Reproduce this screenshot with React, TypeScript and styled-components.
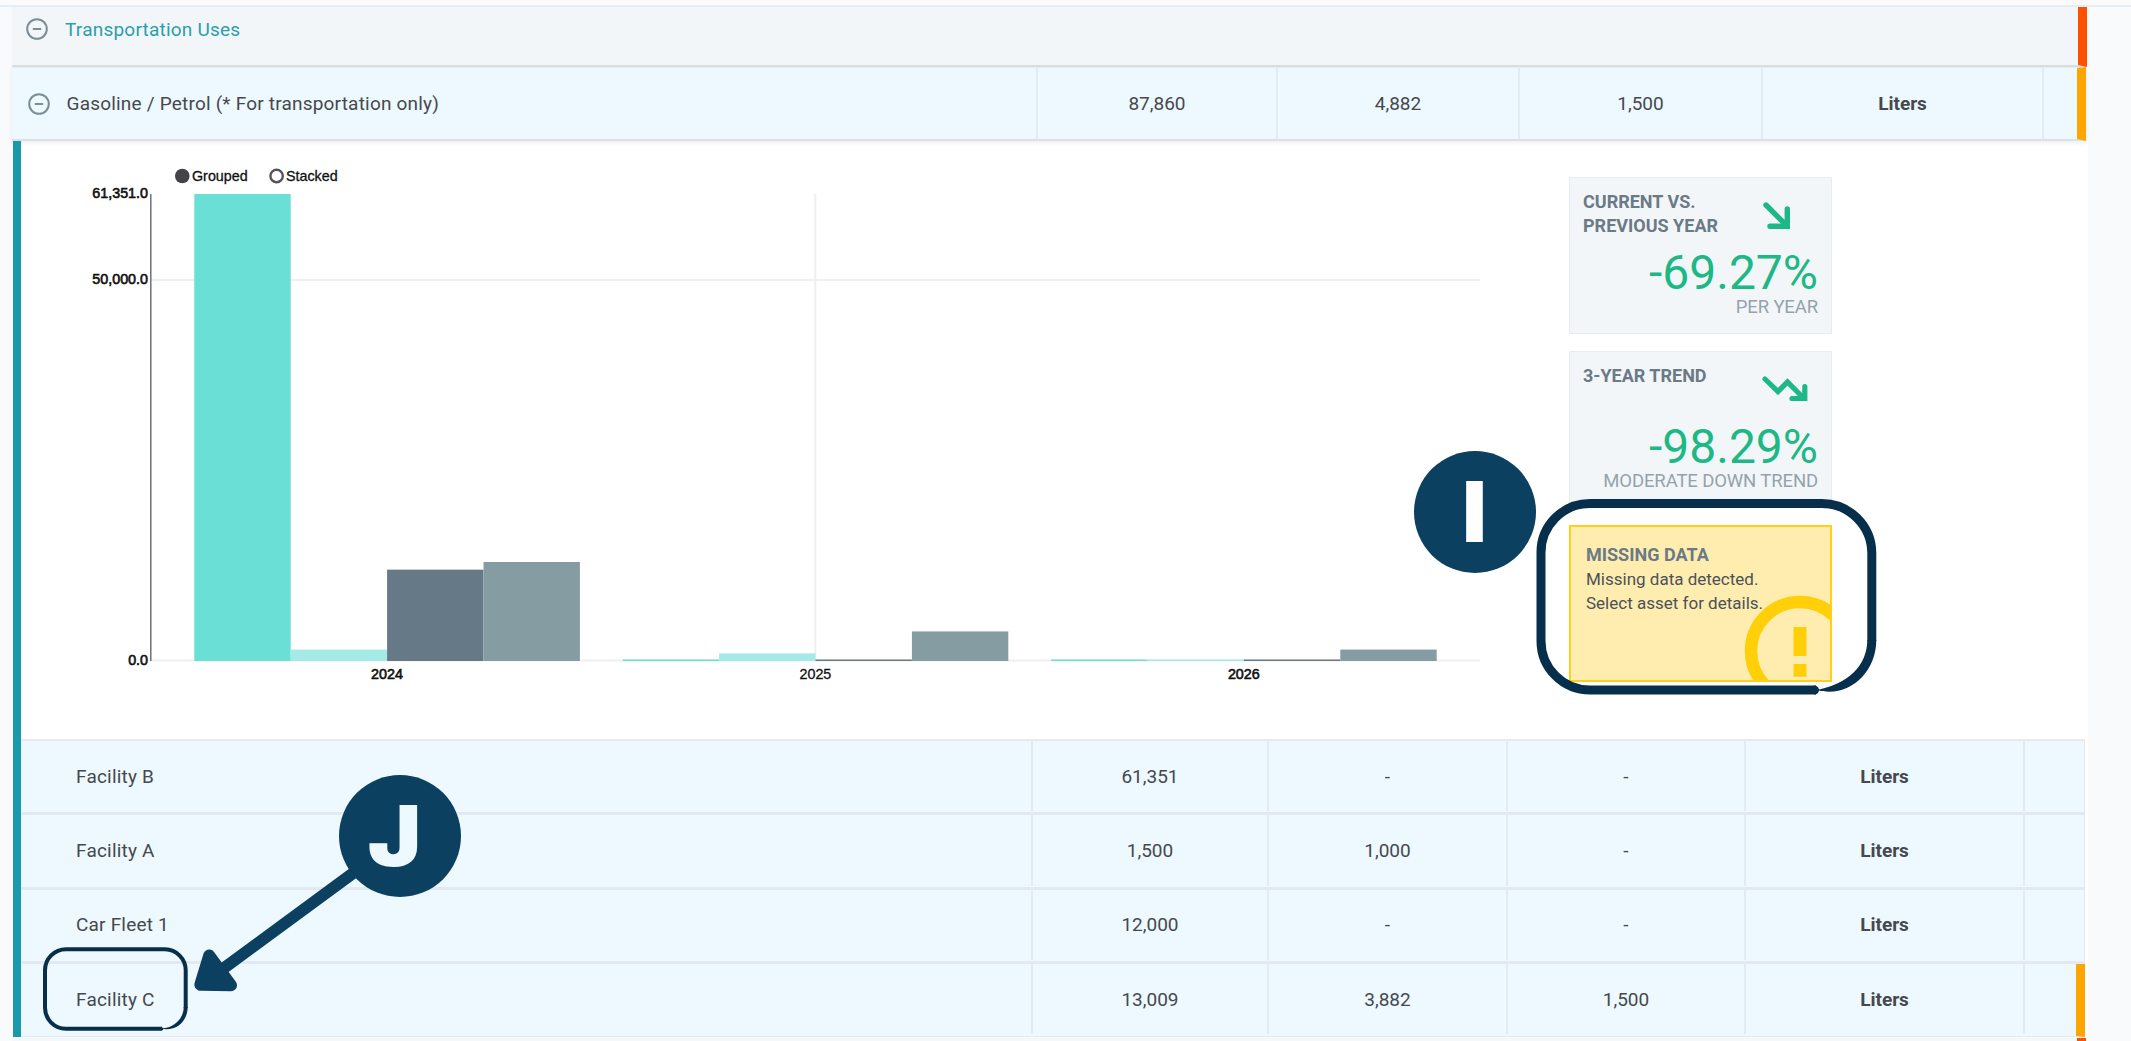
import React from "react";
import styled, { createGlobalStyle } from "styled-components";

const ink = "#45494d";
const navy = "#0c4061";
const outline = "#072f4b";
const green = "#1db885";

const GlobalStyle = createGlobalStyle`
  * { box-sizing: border-box; }
  html, body { margin: 0; padding: 0; background: #f8fafc; }
  body { font-family: Roboto, "Liberation Sans", sans-serif; color: ${ink}; }
`;

const Page = styled.div`
  position: relative;
  width: 2131px;
  height: 1041px;
  overflow: hidden;
  background: #f8fafc;
`;

const TopStrip = styled.div`
  height: 7px;
  background: #fbfbfb;
  border-bottom: 2px solid #e6edf3;
`;

const Panel = styled.main`
  margin-left: 12px;
  width: 2076px;
`;

const CategoryRow = styled.div`
  display: flex;
  align-items: center;
  width: 2075px;
  height: 60px;
  padding: 0 0 14px 14px;
  background: #f3f6f9;
  border-bottom: 2px solid #d9dee2;
  border-right: 9px solid #ff5000;
  color: #2a9fab;
  font-size: 19px;
`;

const CategoryLabel = styled.span`
  margin-left: 17px;
  letter-spacing: 0.22px;
`;

const Grid = styled.div<{ $cols: string; $flag?: string }>`
  display: grid;
  grid-template-columns: ${(p) => p.$cols};
  border-right: ${(p) => (p.$flag ? `9px solid ${p.$flag}` : "1px solid #e3eaf1")};
`;

const FuelRow = styled(Grid)`
  position: relative;
  height: 74px;
  width: 2074px;
  background: #edf8ff;
  border-top: 1px solid #e8edf1;
  border-bottom: 2px solid #dbe1e6;
  box-shadow: 0 2px 4px rgba(80, 100, 120, 0.1);
`;

const FacilityRow = styled(Grid)`
  height: 74.4px;
  padding-bottom: 1px;
  background: #edf8ff;
  border-bottom: 3px solid #e3e9f2;
  &:last-child {
    height: 72.8px;
    padding-bottom: 2px;
    border-bottom-width: 1px;
  }
`;

const NameCell = styled.div<{ $indent: number }>`
  display: flex;
  align-items: center;
  padding-left: ${(p) => p.$indent}px;
  font-size: 19px;
  letter-spacing: 0.2px;
`;

const FuelLabel = styled.span`
  margin-left: 17px;
`;

const Cell = styled.div<{ $bold?: boolean }>`
  display: flex;
  align-items: center;
  justify-content: center;
  border-left: 2px solid #e3ebf2;
  font-size: 19px;
  font-weight: ${(p) => (p.$bold ? 700 : 400)};
`;

const Details = styled.section`
  margin-left: 1px;
  width: 2075px;
  border-left: 8px solid #1a99ac;
  background: #fff;
`;

const Overview = styled.div`
  display: flex;
  height: 598px;
`;

const ChartBox = styled.div`
  width: 1548px;
`;

const Cards = styled.div`
  display: flex;
  flex-direction: column;
  gap: 17.7px;
  padding-top: 36px;
`;

const Card = styled.div<{ $warn?: boolean }>`
  position: relative;
  overflow: hidden;
  width: 263px;
  height: 156.5px;
  padding: ${(p) => (p.$warn ? "15.5px 15px" : "12px 13px")};
  background: ${(p) => (p.$warn ? "#ffedb0" : "#f3f6f9")};
  border: ${(p) => (p.$warn ? "2px solid #ffcf1a" : "1px solid #e6edf1")};
`;

const CardHead = styled.div`
  display: flex;
  justify-content: space-between;
  height: 60px;
`;

const IconSlot = styled.div<{ $right: number }>`
  padding: 12px ${(p) => p.$right}px 0 0;
`;

const CardTitle = styled.div`
  font-size: 18px;
  font-weight: 700;
  line-height: 24px;
  color: #6a7a86;
  white-space: pre-line;
`;

const Figure = styled.div`
  height: 46.5px;
  font-size: 48px;
  line-height: 46px;
  text-align: right;
  color: ${green};
`;

const Caption = styled.div`
  font-size: 18.5px;
  letter-spacing: -0.12px;
  line-height: 20px;
  text-align: right;
  color: #93a3ac;
  white-space: nowrap;
`;

const WarnText = styled.div`
  margin-top: 0.5px;
  font-size: 17px;
  line-height: 24px;
  color: #4b5259;
  white-space: pre-line;
`;

const WarnMark = styled.svg`
  position: absolute;
  left: 173px;
  top: 67.5px;
`;

const Facilities = styled.div`
  width: 2063.5px;
  border-top: 2px solid #e3eaf0;
`;

const NextRow = styled.div`
  margin-top: 1px;
  height: 3px;
  width: 2074px;
  background: #f5f8fb;
  border-right: 9px solid #ff5000;
`;

const Annotations = styled.svg`
  position: absolute;
  left: 0;
  top: 0;
`;

const Badge = styled.div<{ $x: number; $y: number; $ink: string }>`
  position: absolute;
  left: ${(p) => p.$x}px;
  top: ${(p) => p.$y}px;
  width: 122px;
  height: 122px;
  border-radius: 50%;
  display: flex;
  align-items: center;
  justify-content: center;
  background: ${navy};
  color: ${(p) => p.$ink};
  font: 900 84px/122px Inter, sans-serif;
`;

const BadgeLetter = styled.span<{ $shift?: number; $stretch?: number }>`
  display: inline-block;
  transform: translateX(${(p) => p.$shift ?? 0}px) scaleX(${(p) => p.$stretch ?? 1});
`;

const Minus = () => (
  <svg width="22" height="22" viewBox="0 0 22 22" fill="none" stroke="#7b8d97" strokeWidth="2">
    <circle cx="11" cy="11" r="9.8" />
    <path d="M6.8 11h8.4" />
  </svg>
);

const DownArrow = () => (
  <svg width="28" height="28" viewBox="0 0 28 28" fill="none" stroke={green} strokeWidth="5.4" strokeLinecap="round" strokeLinejoin="miter">
    <path d="M3 3L23 23" />
    <path d="M24.300 7V24.200H7" />
  </svg>
);

const TrendArrow = () => (
  <svg width="46" height="26" viewBox="0 0 46 26" fill="none" stroke={green} strokeWidth="5.2" strokeLinecap="round" strokeLinejoin="miter">
    <path d="M3 3L16 15.500L25.500 6L41 21.500" />
    <path d="M42.800 10.500V22.500H30" />
  </svg>
);

const YEARS = ["2024", "2025", "2026"];
const SERIES = [
  { name: "Facility B", color: "#6adfd6", values: [61351, 0, 0] },
  { name: "Facility A", color: "#a4eae7", values: [1500, 1000, 0] },
  { name: "Car Fleet 1", color: "#657a86", values: [12000, 0, 0] },
  { name: "Facility C", color: "#859ca3", values: [13009, 3882, 1500] },
];

const AxisText = styled.text<{ $strong?: boolean }>`
  font-family: "Liberation Sans", Arial, sans-serif;
  font-size: 14.3px;
  fill: #111;
  stroke: #111;
  stroke-width: ${(p) => (p.$strong ? 0.6 : 0.3)}px;
`;

const BASE = 661;
const TOP = 194;

const Chart = () => (
  <svg width="1547" height="598" viewBox="21 141 1547 598">
    <circle cx="182.3" cy="176" r="7.3" fill="#444349" />
    <AxisText x="192" y="181">Grouped</AxisText>
    <circle cx="276.6" cy="176" r="6.2" fill="#fff" stroke="#55545c" strokeWidth="2.4" />
    <AxisText x="286" y="181">Stacked</AxisText>
    <path d="M151 280H1480M151 660.5H1480M815.3 194V661" stroke="#efeff1" strokeWidth="2" />
    <path d="M150.8 194V661" stroke="#66666c" strokeWidth="1.4" />
    {SERIES.map((s, i) =>
      s.values.map((v, g) => {
        const h = Math.max(1.5, (v / 61351) * (BASE - TOP));
        return (
          <rect key={s.name + g} x={194.3 + g * 428.4 + i * 96.4} y={BASE - h} width="96.4" height={h} fill={s.color} />
        );
      })
    )}
    <AxisText $strong x="148" y="198" textAnchor="end">61,351.0</AxisText>
    <AxisText $strong x="148" y="284.3" textAnchor="end">50,000.0</AxisText>
    <AxisText $strong x="148" y="664.5" textAnchor="end">0.0</AxisText>
    {YEARS.map((y, g) => (
      <AxisText key={y} $strong={g !== 1} x={387 + g * 428.4} y="679.3" textAnchor="middle">{y}</AxisText>
    ))}
  </svg>
);

const FACILITIES = [
  { name: "Facility B", values: ["61,351", "-", "-"] },
  { name: "Facility A", values: ["1,500", "1,000", "-"] },
  { name: "Car Fleet 1", values: ["12,000", "-", "-"] },
  { name: "Facility C", values: ["13,009", "3,882", "1,500"], flag: "#ffa500" },
];

export default function App() {
  return (
    <Page>
      <GlobalStyle />
      <TopStrip />
      <Panel>
        <CategoryRow>
          <Minus />
          <CategoryLabel>Transportation Uses</CategoryLabel>
        </CategoryRow>
        <FuelRow $cols="1024px 240px 242px 243px 281px 1fr" $flag="#ffa500">
          <NameCell $indent={15.5}>
            <Minus />
            <FuelLabel>Gasoline / Petrol (* For transportation only)</FuelLabel>
          </NameCell>
          <Cell>87,860</Cell>
          <Cell>4,882</Cell>
          <Cell>1,500</Cell>
          <Cell $bold>Liters</Cell>
          <Cell />
        </FuelRow>
        <Details>
          <Overview>
            <ChartBox><Chart /></ChartBox>
            <Cards>
              <Card>
                <CardHead>
                  <CardTitle>{"CURRENT VS.\nPREVIOUS YEAR"}</CardTitle>
                  <IconSlot $right={27}><DownArrow /></IconSlot>
                </CardHead>
                <Figure>-69.27%</Figure>
                <Caption>PER YEAR</Caption>
              </Card>
              <Card>
                <CardHead>
                  <CardTitle>3-YEAR TREND</CardTitle>
                  <IconSlot $right={10.5}><TrendArrow /></IconSlot>
                </CardHead>
                <Figure>-98.29%</Figure>
                <Caption>MODERATE DOWN TREND</Caption>
              </Card>
              <Card $warn>
                <CardTitle>MISSING DATA</CardTitle>
                <WarnText>{"Missing data detected.\nSelect asset for details."}</WarnText>
                <WarnMark width="112" height="112" viewBox="0 0 112 112" fill="none">
                  <circle cx="56" cy="56" r="49" stroke="#ffcf0a" strokeWidth="12.5" />
                  <path d="M49.5 32h13v29h-13zM49.5 69h13v12.7h-13z" fill="#ffcf0a" />
                </WarnMark>
              </Card>
            </Cards>
          </Overview>
          <Facilities>
            {FACILITIES.map((f) => (
              <FacilityRow key={f.name} $cols="1010px 236px 239px 238px 279px 1fr" $flag={f.flag}>
                <NameCell $indent={55}>{f.name}</NameCell>
                {f.values.map((v, i) => <Cell key={i}>{v}</Cell>)}
                <Cell $bold>Liters</Cell>
                <Cell />
              </FacilityRow>
            ))}
          </Facilities>
        </Details>
        <NextRow />
      </Panel>
      <Annotations width="2131" height="1041" fill="none">
        <path d="M1816 690H1590A49 49 0 0 1 1541 641V553A49 49 0 0 1 1590 503.500H1822A50 50 0 0 1 1871.800 553V641" stroke={outline} strokeWidth="9" />
        <path d="M1814 685.500C1817 685.500 1819 688 1819 689.500C1847 684 1867.300 666 1867.300 640H1876.300C1876.300 669 1855 691.700 1829 691.700C1825 691.700 1821 691.300 1819 690.500C1818.500 693 1817 694.500 1814 694.500Z" fill={outline} />
        <path d="M162 1028.700H66A21 21 0 0 1 45 1007.700V970.300A21 21 0 0 1 66 949.300H165A21 21 0 0 1 185.700 970.300V1008" stroke={outline} strokeWidth="4" />
        <path d="M161 1026.700L163.500 1028.300C175 1027 183.700 1018 183.700 1007H187.700C187.700 1020 178 1029.700 166 1029.300L163.500 1029L162 1030.700Z" fill={outline} />
        <path d="M356 871L220 971" stroke={navy} strokeWidth="11.8" />
        <path d="M209.200 955.500L200.300 984.700L231 985.300Z" fill={navy} stroke={navy} strokeWidth="12" strokeLinejoin="round" />
      </Annotations>
      <Badge $x={1414} $y={450.5} $ink="#ffffff"><BadgeLetter $shift={-0.5}>I</BadgeLetter></Badge>
      <Badge $x={338.5} $y={775} $ink="#edf8ff"><BadgeLetter $shift={-4.5} $stretch={1.07}>J</BadgeLetter></Badge>
    </Page>
  );
}
